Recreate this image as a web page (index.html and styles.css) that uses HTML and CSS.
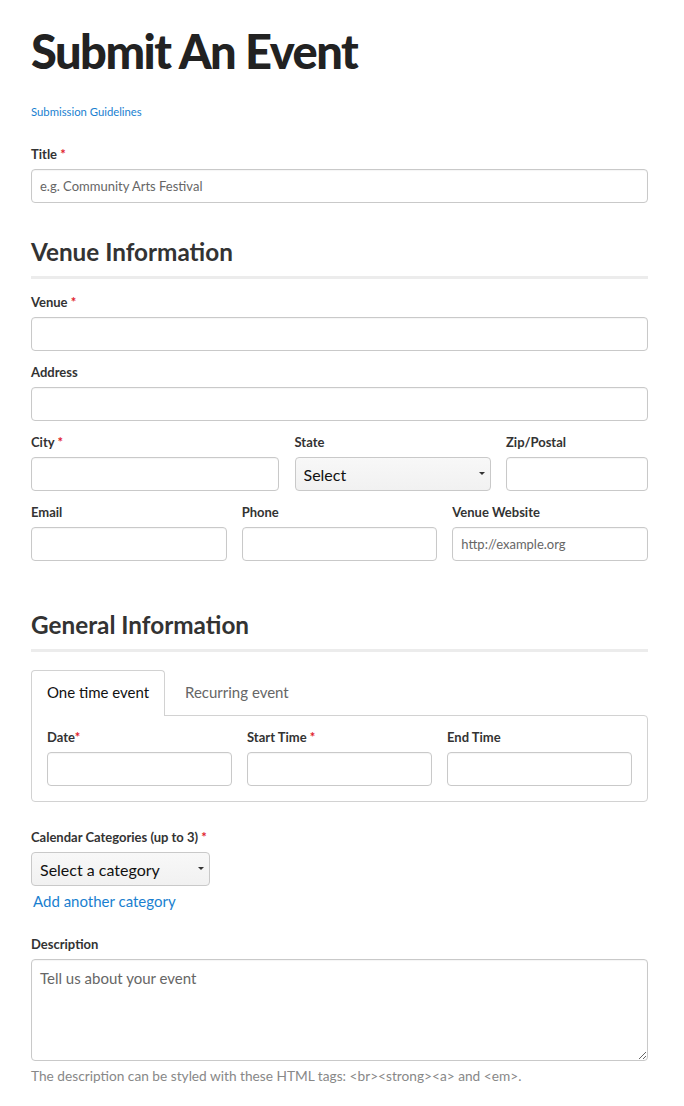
FILE: index.html
```html
<!DOCTYPE html>
<html lang="en">
<head>
    <meta charset="UTF-8">
    <meta name="viewport" content="width=device-width, initial-scale=1.0">
    <title>Submit An Event</title>
    <link rel="stylesheet" href="styles.css">
</head>
<body>
    <div class="page">
        <h1>Submit An Event</h1>
        <a class="guidelines" href="#">Submission Guidelines</a>

        <form class="event-form">
            <div class="field">
                <label for="title">Title <span class="req">*</span></label>
                <input type="text" id="title" placeholder="e.g. Community Arts Festival">
            </div>

            <h2>Venue Information</h2>
            <div class="field">
                <label for="venue">Venue <span class="req">*</span></label>
                <input type="text" id="venue">
            </div>
            <div class="field">
                <label for="address">Address</label>
                <input type="text" id="address">
            </div>
            <div class="row row-city">
                <div class="field">
                    <label for="city">City <span class="req">*</span></label>
                    <input type="text" id="city">
                </div>
                <div class="field">
                    <label for="state">State</label>
                    <div class="select-wrap">
                        <select id="state"><option>Select</option></select>
                    </div>
                </div>
                <div class="field">
                    <label for="zip">Zip/Postal</label>
                    <input type="text" id="zip">
                </div>
            </div>
            <div class="row row-three">
                <div class="field">
                    <label for="email">Email</label>
                    <input type="text" id="email">
                </div>
                <div class="field">
                    <label for="phone">Phone</label>
                    <input type="text" id="phone">
                </div>
                <div class="field">
                    <label for="website">Venue Website</label>
                    <input type="text" id="website" placeholder="http://example.org">
                </div>
            </div>

            <h2 class="general">General Information</h2>
            <div class="tabs">
                <div class="tab active">One time event</div>
                <div class="tab">Recurring event</div>
            </div>
            <div class="tab-panel">
                <div class="row row-three">
                    <div class="field">
                        <label for="date">Date<span class="req">*</span></label>
                        <input type="text" id="date">
                    </div>
                    <div class="field">
                        <label for="start">Start Time <span class="req">*</span></label>
                        <input type="text" id="start">
                    </div>
                    <div class="field">
                        <label for="end">End Time</label>
                        <input type="text" id="end">
                    </div>
                </div>
            </div>

            <div class="field categories">
                <label for="category">Calendar Categories (up to 3) <span class="req">*</span></label>
                <div class="select-wrap small">
                    <select id="category"><option>Select a category</option></select>
                </div>
                <a class="add-link" href="#">Add another category</a>
            </div>

            <div class="field description">
                <label for="desc">Description</label>
                <textarea id="desc" placeholder="Tell us about your event"></textarea>
                <p class="help">The description can be styled with these HTML tags: &lt;br&gt;&lt;strong&gt;&lt;a&gt; and &lt;em&gt;.</p>
            </div>
        </form>
    </div>
</body>
</html>
```

FILE: styles.css
```css
body {
    font-family: Lato, 'Open Sans', sans-serif;
    background: #ffffff;
    color: #333;
    margin: 0;
    padding: 0;
}
.page {
    padding: 22px 36px 0 31px;
}
h1 {
    font-size: 47px;
    font-weight: 900;
    color: #222;
    margin: 0;
    line-height: 58px;
    letter-spacing: -1.5px;
}
.guidelines {
    display: block;
    margin-top: 24px;
    font-size: 11.3px;
    line-height: 16px;
    color: #1a7fd0;
    text-decoration: none;
}
.event-form {
    margin-top: 25px;
}
.field {
    display: flex;
    flex-direction: column;
    margin-bottom: 12px;
    min-width: 0;
}
label {
    font-size: 13px;
    font-weight: bold;
    color: #333;
    line-height: 18px;
    margin-bottom: 6px;
}
.req {
    color: #e0202a;
}
input, textarea {
    width: 100%;
    height: 34px;
    box-sizing: border-box;
    border: 1px solid #c9c9c9;
    border-radius: 4px;
    padding: 0 8px;
    font-family: Lato, sans-serif;
    font-size: 13px;
    color: #333;
    box-shadow: inset 0 1px 1px rgba(0, 0, 0, 0.04);
}
input::placeholder, textarea::placeholder {
    color: #666;
}
h2 {
    font-size: 24.3px;
    font-weight: bold;
    color: #333;
    line-height: 30px;
    margin: 34px 0 14px;
    padding-bottom: 9px;
    border-bottom: 3px solid #ececec;
}
h2.general {
    margin-top: 37px;
    margin-bottom: 17px;
}
.row {
    display: grid;
    gap: 15px;
}
.row-city {
    grid-template-columns: 248px 196px minmax(0, 1fr);
    column-gap: 15.5px;
}
.row-three {
    grid-template-columns: repeat(3, minmax(0, 1fr));
}
.select-wrap {
    position: relative;
}
.select-wrap::after {
    content: "";
    position: absolute;
    right: 6px;
    top: 15px;
    border-left: 3px solid transparent;
    border-right: 3px solid transparent;
    border-top: 3px solid #333;
    pointer-events: none;
}
select {
    -webkit-appearance: none;
    appearance: none;
    width: 100%;
    height: 34px;
    border: 1px solid #c9c9c9;
    border-radius: 4px;
    background: linear-gradient(#f8f8f8, #f1f1f1);
    padding: 0 8px;
    font-family: Lato, sans-serif;
    font-size: 16px;
    color: #111;
}
.select-wrap.small {
    width: 179px;
}
.tabs {
    display: flex;
    align-items: flex-end;
}
.tab {
    height: 46px;
    box-sizing: border-box;
    padding: 0 20px;
    display: flex;
    align-items: center;
    font-size: 15px;
    color: #666;
}
.tab.active {
    color: #111;
    border: 1px solid #d2d2d2;
    border-bottom: none;
    border-radius: 4px 4px 0 0;
    background: #fff;
    margin-bottom: -1px;
    position: relative;
    width: 134px;
    padding: 0 0 3px 15px;
}
.tab-panel {
    border: 1px solid #d2d2d2;
    border-radius: 0 4px 4px 4px;
    padding: 12px 15px 15px;
}
.tab-panel .field {
    margin-bottom: 0;
}
.categories {
    margin-top: 26px;
    margin-bottom: 24px;
}
.add-link {
    font-size: 15px;
    line-height: 20px;
    margin: 5px 0 0 2px;
    color: #1a7fd0;
    text-decoration: none;
}
.description textarea {
    height: 102px;
    padding: 9px 8px;
    font-size: 15px;
    resize: vertical;
}
.help {
    margin: 6px 0 0;
    font-size: 13.7px;
    color: #888;
    line-height: 18px;
}
```
